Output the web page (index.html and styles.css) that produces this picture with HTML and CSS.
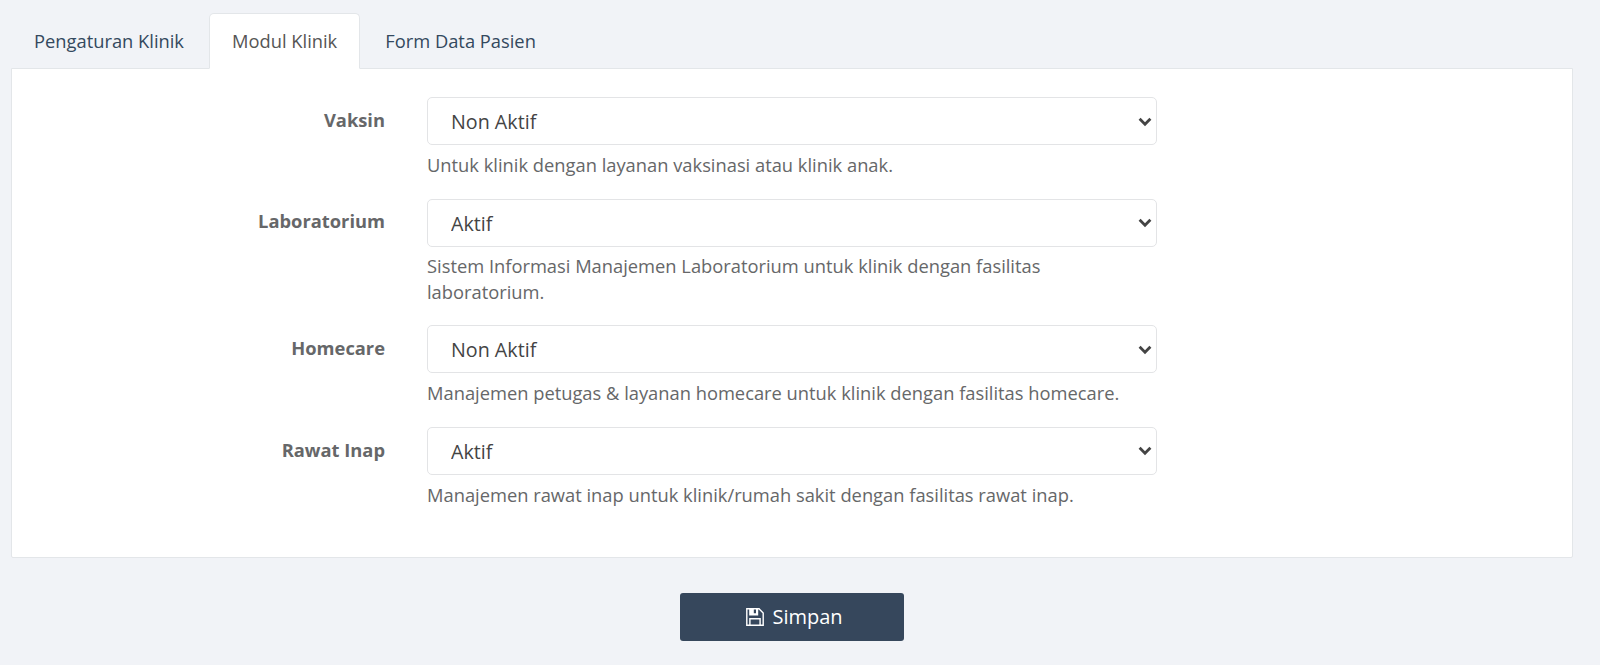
FILE: index.html
```html
<!DOCTYPE html>
<html lang="id">
<head>
    <meta charset="utf-8">
    <title>Modul Klinik</title>
    <link rel="stylesheet" href="styles.css">
</head>
<body>
    <ul class="nav-tabs">
        <li><a>Pengaturan Klinik</a></li>
        <li class="active"><a>Modul Klinik</a></li>
        <li><a>Form Data Pasien</a></li>
    </ul>
    <form>
        <div class="tab-content">
            <div class="form-group">
                <label for="vaksin">Vaksin</label>
                <div class="field">
                    <div class="select-wrap">
                        <select id="vaksin">
                            <option>Non Aktif</option>
                            <option>Aktif</option>
                        </select>
                        <svg class="caret" viewBox="0 0 14 10"><path d="M1.6 1.8 7 7.2l5.4-5.4"/></svg>
                    </div>
                    <p class="help-block">Untuk klinik dengan layanan vaksinasi atau klinik anak.</p>
                </div>
            </div>
            <div class="form-group">
                <label for="laboratorium">Laboratorium</label>
                <div class="field">
                    <div class="select-wrap">
                        <select id="laboratorium">
                            <option>Aktif</option>
                            <option>Non Aktif</option>
                        </select>
                        <svg class="caret" viewBox="0 0 14 10"><path d="M1.6 1.8 7 7.2l5.4-5.4"/></svg>
                    </div>
                    <p class="help-block">Sistem Informasi Manajemen Laboratorium untuk klinik dengan fasilitas laboratorium.</p>
                </div>
            </div>
            <div class="form-group">
                <label for="homecare">Homecare</label>
                <div class="field">
                    <div class="select-wrap">
                        <select id="homecare">
                            <option>Non Aktif</option>
                            <option>Aktif</option>
                        </select>
                        <svg class="caret" viewBox="0 0 14 10"><path d="M1.6 1.8 7 7.2l5.4-5.4"/></svg>
                    </div>
                    <p class="help-block">Manajemen petugas &amp; layanan homecare untuk klinik dengan fasilitas homecare.</p>
                </div>
            </div>
            <div class="form-group">
                <label for="rawat-inap">Rawat Inap</label>
                <div class="field">
                    <div class="select-wrap">
                        <select id="rawat-inap">
                            <option>Aktif</option>
                            <option>Non Aktif</option>
                        </select>
                        <svg class="caret" viewBox="0 0 14 10"><path d="M1.6 1.8 7 7.2l5.4-5.4"/></svg>
                    </div>
                    <p class="help-block">Manajemen rawat inap untuk klinik/rumah sakit dengan fasilitas rawat inap.</p>
                </div>
            </div>
        </div>
        <div class="form-actions">
            <button type="button" class="btn-save">
                <svg class="icon-save" viewBox="0 0 18 18">
                    <path class="line" d="M.8.8H13l4.2 4.2v12.2H.8zM3.9 17v-6.2h10.2V17M3.9 1v5.7h7.6V1"/>
                    <path class="fill" d="M3.9.8h3.9v5.9H3.9zM10 .8h1.8v5.9H7.8V5.200H10z"/>
                </svg>
                <span>Simpan</span>
            </button>
        </div>
    </form>
</body>
</html>
```

FILE: styles.css
```css
* {
    box-sizing: border-box;
}
body {
    margin: 0;
    padding: 13px 27px 0 11px;
    background-color: #f1f3f7;
    color: #666769;
    font-family: "Open Sans", sans-serif;
    font-size: 18.32px;
    line-height: 25.4px;
}
.nav-tabs {
    display: flex;
    margin: 0 0 -1px;
    padding: 0;
    list-style: none;
}
.nav-tabs a {
    display: block;
    height: 56px;
    margin-right: 2.5px;
    padding: 14px 21.5px 0 22px;
    border: 1px solid transparent;
    border-radius: 5px 5px 0 0;
    color: #34495e;
}
.nav-tabs .active a {
    position: relative;
    background-color: #fff;
    border-color: #e3e6e9;
    border-bottom-color: #fff;
    color: #555;
}
.tab-content {
    height: 490px;
    padding: 28px 0 0;
    background-color: #fff;
    border: 1px solid #e3e6e9;
    border-radius: 0 0 2px 2px;
}
.form-group {
    display: flex;
    margin-bottom: 21.5px;
}
label {
    width: 373px;
    margin-right: 42px;
    padding-top: 9.6px;
    text-align: right;
    font-weight: 700;
}
.field {
    width: 730px;
}
.select-wrap {
    position: relative;
}
select {
    display: block;
    width: 100%;
    height: 48px;
    padding: 1px 23px 0;
    appearance: none;
    background-color: #fff;
    border: 1px solid #e3e4e6;
    border-radius: 5px;
    color: #444;
    font-family: inherit;
    font-size: 19.7px;
}
.caret {
    position: absolute;
    top: 19.5px;
    right: 5px;
    width: 14px;
    height: 10px;
    fill: none;
    stroke: #444;
    stroke-width: 2.8;
}
.help-block {
    margin: 6.6px 0 0;
}
.form-actions {
    display: flex;
    justify-content: center;
    margin-top: 35px;
}
.btn-save {
    display: flex;
    align-items: center;
    justify-content: center;
    gap: 8px;
    width: 224px;
    height: 48px;
    padding: 0 0 1px 5px;
    background-color: #36475c;
    border: 0;
    border-radius: 3px;
    color: #fff;
    font-family: inherit;
    font-size: 20px;
}
.icon-save {
    width: 18px;
    height: 18px;
}
.icon-save .line {
    fill: none;
    stroke: #fff;
    stroke-width: 1.4;
}
.icon-save .fill {
    fill: #fff;
}
```
